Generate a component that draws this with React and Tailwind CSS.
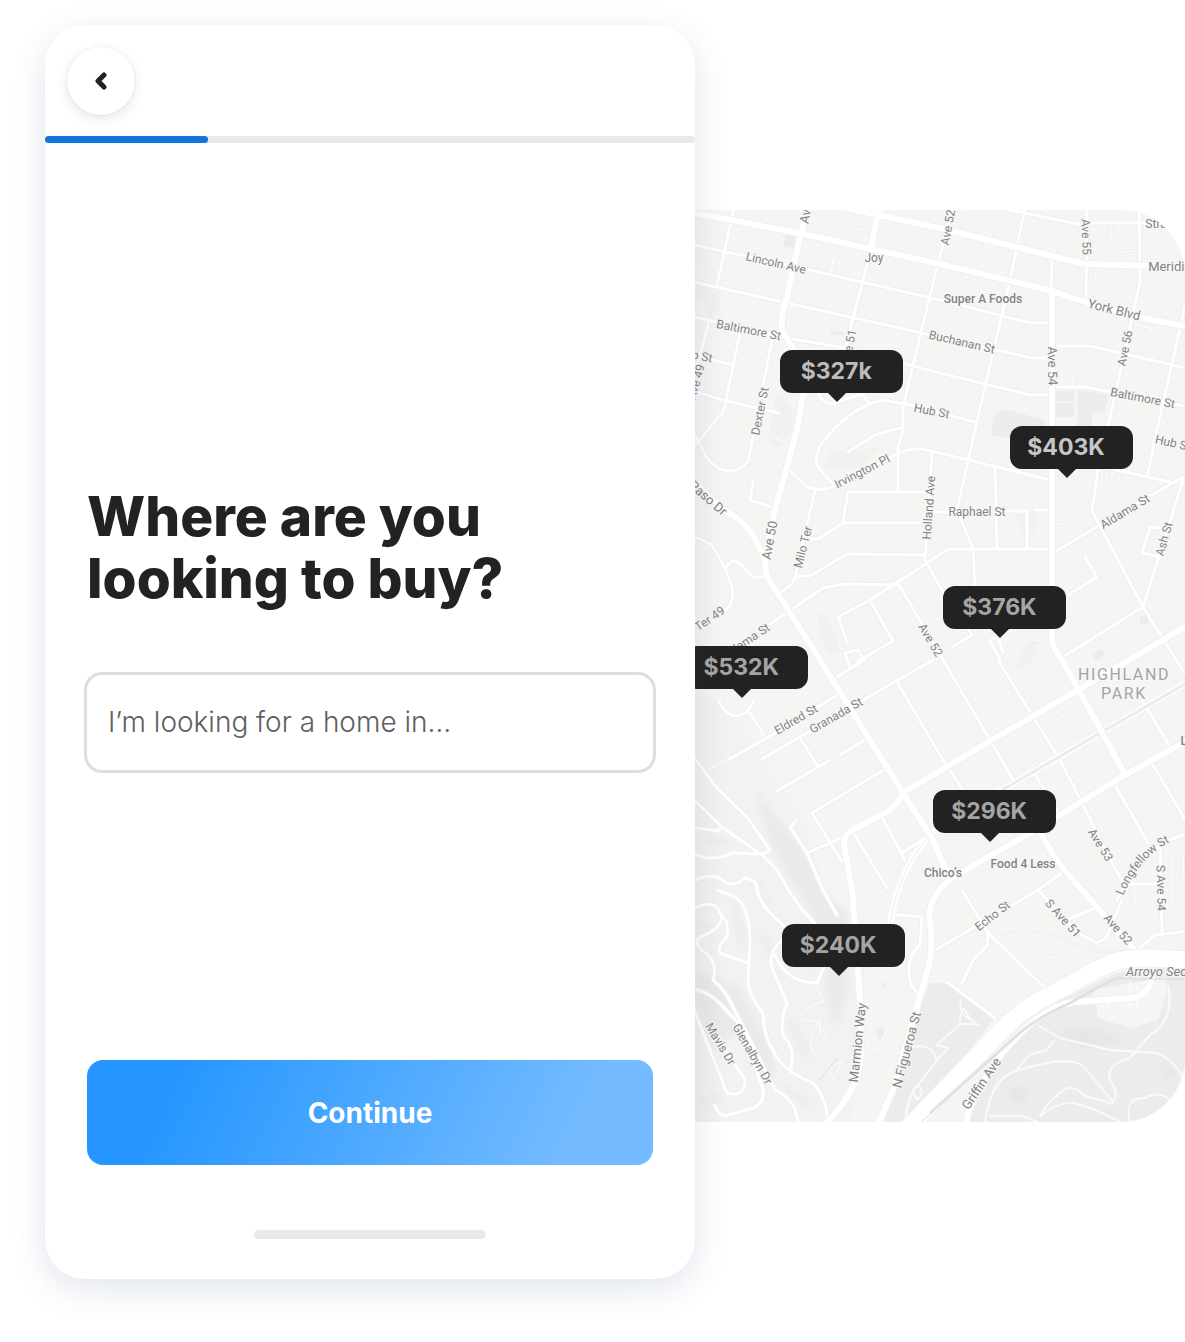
import React from "react";

const highways = [
  "M908 1128L1004 1028Q1025 1007 1050 995L1098 969Q1120 957 1145 958L1190 960",
];

const majorRoads = [
  "M690 212L803 234L940 264L1048 290L1085 302L1142 318L1190 327",
  "M846 208L940 228L1052 256L1085 264L1190 267",
  "M809 205L800 237L787 297Q779 320 783 333Q805 362 803 395L797 430L775 510L766 555Q764 570 768 578L820 660L903 793L932 838L950 880",
  "M879 208L871 248",
  "M1052 290L1052 580L1052 640Q1053 648 1062 660L1102 732L1125 775",
  "M690 477Q715 505 738 519Q753 530 765 560",
  "M852 890L845 850Q842 836 852 830L885 813Q895 809 903 793L990 741L1078 690L1190 624",
  "M852 885L860 1000Q864 1065 855 1083Q845 1103 826 1124",
  "M1190 739L1125 775L1032 832L960 873Q932 889 929 915Q934 940 929 965L893 1090L878 1124",
  "M966 1124Q970 1096 1002 1053Q1043 1005 1075 1002L1132 998Q1154 994 1152 968",
  "M1037 823Q1045 850 1082 890L1152 970",
];

const streets = [
  "M734 208L717 285", "M863 280L872 247M863 280L849 333L835 400",
  "M953 205L935 275L903 407V430L898 447V491",
  "M1025 208L1010 280L975 430L957 510L973 548L975 587",
  "M1087 208L1086 300", "M1139 208L1140 282L1108 427L1098 470L1092 511L1143 607L1190 682",
  "M1190 284L1157 430L1147 477", "M1052 256L1051 290",
  "M690 244L745 256L805 269L940 300L1030 323H1052",
  "M690 281L787 303L940 337L1032 358H1052",
  "M690 316L782 337L845 348L940 373L1030 395H1052",
  "M1000 208L1083 225L1090 223H1190",
  "M1055 346H1090L1190 369", "M1055 387H1085L1190 407",
  "M690 390L726 401L779 413",
  "M709 322L690 392M740 332L726 401Q725 412 716 420L694 447",
  "M772 340L753 437L748 462Q728 482 707 458L696 437",
  "M690 355L734 365", "M818 391Q821 405 835 403Q843 399 860 395",
  "M975 422L910 405L882 400Q855 407 833 430Q806 458 823 473L835 486",
  "M789 470L807 487Q822 493 837 485L890 458Q905 448 922 449L940 453L1050 480",
  "M848 452L875 435L900 428M862 394L868 402",
  "M753 482L750 500L775 508", "M815 490L796 573Q796 584 778 594",
  "M848 492H927M848 492L843 521M812 539H818L843 523H927",
  "M797 576H810L847 554L925 555",
  "M932 453L925 560L940 587L972 635L952 647",
  "M725 568L733 560Q740 562 753 577H765M690 534L712 545L725 568L732 587Q736 605 720 614",
  "M770 624L823 588L845 584L898 585",
  "M847 642L838 617L870 600L927 563L948 549H1052",
  "M870 600L893 641L858 661", "M898 583L943 660L990 740L1015 783",
  "M995 467L997 548M1007 511H1027V548M935 512H950M1035 510H1050",
  "M1055 552L1100 525L1190 473M1108 468L1170 482",
  "M1183 480L1143 607L1063 657M1165 528L1150 527L1142 553L1160 557",
  "M1068 595L1097 577L1085 557",
  "M728 760L772 735L842 692M719 701Q729 724 748 711L754 700M750 713L764 735",
  "M762 759L863 700L933 660", "M837 677L850 669L865 660",
  "M845 653L858 650L864 660L850 668Z",
  "M990 641L1000 660M990 641Q993 636 999 640L1003 653",
  "M777 791L830 760M840 755L868 738M800 738L817 765",
  "M887 768L812 813L842 862L847 859",
  "M797 820L790 827L807 853L823 890L837 915M807 853L843 837",
  "M897 682L940 755L963 790M853 832L887 888M882 817L905 860M903 852L938 830",
  "M998 660L1032 715L1060 760L1082 803L1105 850L1127 890",
  "M1035 775L1060 815M1115 785L1148 843M1152 763L1190 828M1142 700L1172 750",
  "M690 752L717 788L747 817L770 850L762 855L777 870L790 893L801 908L815 924",
  "M690 796L722 827L762 855M690 827L717 831L722 827M690 851Q707 864 733 853L762 854",
  "M690 883Q711 871 722 880T745 878Q758 880 757 890Q760 905 780 922L790 933",
  "M717 890L735 897Q749 905 750 940L748 985Q752 1000 763 1013Q764 1038 773 1050Q781 1070 813 1083Q829 1102 827 1124",
  "M690 911Q716 895 722 917Q720 930 700 937Q691 943 708 955Q718 966 713 980Q724 988 733 1007L745 1030Q757 1073 763 1090Q765 1103 753 1108L728 1115Q719 1118 715 1105",
  "M719 912Q730 920 727 937Q714 950 722 954L748 963",
  "M690 988Q711 991 726 1010L745 1030L775 1090Q797 1100 798 1124",
  "M690 1000L727 1093Q745 1098 745 1080L720 1040",
  "M782 940Q766 955 773 970L787 1003Q779 1025 784 1037Q797 1049 790 1072",
  "M775 955Q787 983 817 983L824 967",
  "M935 950L975 927L1038 890L1066 870M962 890L988 933L1045 988",
  "M1038 890L1078 933L1097 943L1106 938L1122 900M1062 922L1095 908",
  "M1117 900Q1140 857 1165 842L1190 832M1160 847L1162 933M1127 884H1160",
  "M1120 965L1155 935L1190 931",
  "M947 982L995 1018M988 933L987 946L973 960L962 983",
  "M888 914L922 917L920 945Q904 958 911 985L922 998",
];

const lanes = [
  "M695 264L718 269M837 246L831 274M832 260H839V275M833 260L829 275M833 296L829 310",
  "M845 225L885 236M862 217L875 220M862 217L861 226M787 312L790 316L787 330",
  "M955 214L1020 229M1063 210L1061 232M1111 224V240M1119 224V236M1127 239H1140M1115 260V252L1140 251",
  "M1068 283H1086M1095 270V280H1100M963 276L998 287M963 285L994 295M1000 280V272H1008",
  "M1113 288L1105 314M1140 293L1190 304M1170 304L1165 320M1135 325L1160 330L1155 343M1144 327L1141 339M1151 328L1148 341",
  "M1055 367H1090L1190 388M1073 372V386M997 390L996 405M900 382L935 391",
  "M935 390L978 400M1110 411L1190 430M1164 344L1160 360",
  "M773 438L792 444M775 458L786 461M753 450L768 453M799 485L787 546M752 530L770 535",
  "M935 431L971 441M1055 524H1068M1103 471L1100 483M1108 471L1105 485M1113 472L1110 486M1120 474L1118 486",
  "M1106 502L1113 516M1113 498L1122 512M1013 551V569M1107 589L1112 595L1130 585M1123 570L1137 562M1155 575L1175 580",
  "M1082 625L1093 613L1108 630M1097 611L1104 607L1111 621M1157 615L1165 610L1175 628L1168 632ZM1101 632L1118 660",
  "M690 595Q708 585 725 576M708 770L730 757M863 630L843 645M893 640L925 625",
  "M1000 640H1052M1026 628V640",
  "M830 820L882 793M823 827L874 803M865 716L852 740M875 694L914 760M887 712L906 702M914 690L945 740",
  "M860 839L904 817M900 808L925 795M902 772L935 750M823 687L827 700",
  "M1000 678L1015 703M964 680L1005 752M982 723L1030 696L1065 675M1045 725L1080 707M1013 731L1035 770M975 750L1004 794",
  "M1075 720L1101 762M1061 712L1078 742M1060 760L1078 751M1072 778L1092 768L1079 745",
  "M1100 675L1120 716M1152 693L1175 730M1120 746L1130 738L1138 752M1137 746L1160 733M1168 706L1184 735",
  "M1135 775L1145 793L1160 785M1170 760L1178 780L1165 790M1155 812L1170 804M1160 829L1185 814",
  "M1074 820L1102 814L1111 828L1096 840M1056 820L1070 830L1080 825M1096 878L1110 870",
  "M940 844L970 828M984 842L993 855M1054 843L1073 835L1080 850M970 878L990 870M975 883L1001 868M1120 875L1128 884",
  "M890 890L880 910L865 970M905 890L930 900M950 915Q958 901 975 896M1007 905L1015 920M1018 900L1026 918",
  "M1030 993L1038 983M1035 955L1050 958L1065 955L1077 962M1045 942L1055 950L1048 960M1005 955L998 968",
  "M980 978L990 987L982 1003M1018 978L1030 986L1040 981M1123 925L1132 930L1143 923",
  "M878 973H910M890 1004L912 1000M870 1048L890 1051M815 983L824 1002Q797 1008 802 1021Q822 1016 827 1040Q817 1041 820 1020Q804 1040 815 1055",
  "M895 1019L875 1050L868 1080L850 1124M829 1070L842 1061L834 1079ZM695 1078L710 1065M745 1085L762 1095",
  "M1135 870V905M1172 855V905M1184 850L1182 900",
];

const trails = [
  "M1037 1025L1060 1038L1110 1050L1157 1053Q1176 1060 1190 1090",
  "M985 1122Q991 1078 1016 1071Q1073 1053 1085 1068T1113 1102Q1120 1095 1110 1080Q1105 1065 1130 1058L1150 1035Q1175 1020 1168 985",
  "M1040 1116Q1046 1104 1060 1093Q1072 1082 1085 1096L1113 1104M1040 1116Q1056 1102 1074 1103Q1095 1108 1120 1122",
  "M1130 1122Q1123 1098 1145 1098Q1160 1090 1170 1100M1015 1072L1030 1054L1045 1051L1055 1040",
  "M960 1000L962 1014L980 1026M960 1022V1014M960 1024H978M963 1008L976 1026M937 1045L960 1024M935 1062L948 1048L936 1045",
  "M895 1054Q930 1036 937 1060Q930 1070 918 1085Q908 1096 905 1122M918 1085Q926 1094 917 1099Q909 1090 918 1085",
  "M990 1116H1022L1038 1122M1101 1000L1104 1010M1108 1000V1010M1130 980V1010M1137 985V1010M1142 984L1149 982",
];

const hills = [
  "M756 790Q770 810 790 833Q812 860 818 885Q833 905 846 908L848 990Q840 1025 834 1025Q824 1000 825 940Q805 900 780 862Q762 825 756 790Z",
  "M735 980Q748 1000 765 1035Q782 1075 768 1085Q745 1045 735 1025Q722 1000 735 980Z",
  "M695 975Q715 970 730 990L737 1030L715 1050Q700 1020 695 1000Z",
  "M1060 1033Q1090 1020 1120 1040Q1105 1049 1075 1045Z",
  "M830 450Q850 455 880 446L865 466Q840 476 825 465Z",
  "M775 395Q796 400 793 430L778 448Q765 445 770 425Z",
  "M820 610Q836 630 840 650L830 655Q815 635 820 610Z",
];

const labels = [
  ["Lincoln Ave", 775, 267, 13, 12], ["Joy", 874, 262, 0, 12], ["Baltimore St", 748, 334, 11, 12],
  ["Super A Foods", 983, 303, 0, 12, 500], ["York Blvd", 1113, 314, 14, 13], ["Buchanan St", 961, 346, 13, 12],
  ["Ave 52", 952, 228, -80, 12], ["Ave 55", 1082, 237, 88, 12], ["Ave 54", 1048, 366, 89, 13],
  ["Ave 56", 1129, 349, -78, 12], ["Meridian St", 1181, 271, 0, 13], ["Strat", 1158, 228, 0, 12],
  ["Ave 50", 812, 205, -79, 13], ["Ave 51", 853, 348, -79, 12], ["Baltimore St", 1142, 402, 11, 12],
  ["Hub St", 931, 415, 11, 12], ["Hub St", 1172, 447, 13, 12], ["Hub St", 694, 359, 11, 12], ["Ave 49", 700, 383, -74, 12],
  ["Dexter St", 764, 412, -79, 12], ["Irvington Pl", 864, 475, -27, 12], ["Holland Ave", 933, 508, -86, 12],
  ["Raphael St", 977, 516, 0, 12], ["Aldama St", 1127, 515, -31, 12], ["Ash St", 1168, 540, -74, 12],
  ["El Paso Dr", 700, 497, 41, 13], ["Ave 50", 774, 541, -80, 13], ["Milo Ter", 807, 548, -76, 12],
  ["Ter 49", 712, 622, -35, 12], ["Aldama St", 748, 645, -34, 12], ["Ave 52", 927, 642, 59, 12],
  ["Eldred St", 798, 723, -30, 12], ["Granada St", 838, 719, -30, 12], ["Chico’s", 943, 877, 0, 12, 500],
  ["Food 4 Less", 1023, 868, 0, 12, 500], ["Ave 53", 1097, 847, 58, 12], ["S Ave 54", 1157, 888, 89, 12],
  ["Echo St", 995, 919, -38, 12], ["S Ave 51", 1060, 921, 48, 12], ["Ave 52", 1115, 932, 48, 12],
  ["Marmion Way", 862, 1043, -84, 13], ["N Figueroa St", 911, 1051, -75, 13], ["Griffin Ave", 985, 1086, -56, 13],
  ["Mavis Dr", 717, 1046, 59, 12], ["Glenalbyn Dr", 749, 1056, 60, 12], ["La", 1187, 745, 0, 12, 500],
];

const pins = [
  { price: "$327k", place: "left-[17.3%] top-[15.3%]", tone: "text-[#bcbcbc]" },
  { price: "$403K", place: "left-[64.2%] top-[23.7%]", tone: "text-[#c6c6c6]" },
  { price: "$376K", place: "left-[50.6%] top-[41.2%]", tone: "text-[#a5a5a5]" },
  { price: "$532K", place: "left-[-2.1%] top-[47.8%]", tone: "text-[#a5a5a5]" },
  { price: "$296K", place: "left-[48.5%] top-[63.6%]", tone: "text-[#a5a5a5]" },
  { price: "$240K", place: "left-[17.7%] top-[78.3%]", tone: "text-[#a5a5a5]" },
];

function Roads({ paths, width, casing = "#eff0ef", edge = 2 }) {
  const d = paths.join("");
  return (
    <g fill="none" strokeLinejoin="round" strokeLinecap="round">
      <path d={d} stroke={casing} strokeWidth={width + edge} />
      <path d={d} stroke="#fff" strokeWidth={width} />
    </g>
  );
}

function StreetMap() {
  return (
    <svg viewBox="695 210 490 912" className="block h-auto w-full" role="img" aria-label="Map of Highland Park">
      <defs>
        <filter id="soft" x="-20%" y="-20%" width="140%" height="140%">
          <feGaussianBlur stdDeviation="3" />
        </filter>
        <path id="longfellow" d="M1123 896Q1139 857 1170 842" />
      </defs>
      <rect x="690" y="205" width="500" height="922" fill="#f5f5f4" />
      <path d="M695 690Q740 710 760 760Q800 800 825 890L870 940L850 1124H690Z" fill="#f1f2f1" filter="url(#soft)" />
      <g fill="#e9eae9" filter="url(#soft)">
        {hills.slice(0, 3).map((d) => <path key={d} d={d} />)}
      </g>
      <g fill="#f1f1f0">
        {hills.slice(4).map((d) => <path key={d} d={d} />)}
        <path d="M695 285Q718 288 720 305Q714 320 706 324Q713 300 695 296ZM1015 513H1035V532H1022ZM1028 640H1040L1030 664L1015 670ZM880 680L925 658L895 675Z" />
      </g>
      <path
        fill="none"
        stroke="#ebecec"
        strokeWidth="6"
        filter="url(#soft)"
        d="M760 930L775 960M800 945L812 970M700 1105L720 1095M755 880L770 910M705 840L730 842M790 1020L810 1060M735 900L742 950M700 925L712 930M780 1085L810 1105"
      />
      <g fill="#eaedec">
        <path d="M930 983H947L995 1018L912 1122H884L920 1010Z" />
        <path d="M968 1124L985 1080L1020 1035L1060 1000L1120 972L1190 966V1124Z" />
        <path d="M786 233L797 236L795 249L783 246Z" />
        <path d="M993 418Q1000 408 1012 411L1045 420L1046 440L992 436Z" />
        <path d="M1056 391H1074V401H1056ZM1056 403H1074V417H1056ZM1078 390L1108 395L1105 413L1092 412V426H1077Z" />
        <path d="M831 331L844 331L843 335H831ZM875 1030L883 1026L886 1033L879 1041ZM1140 617H1148V624H1140ZM1092 655L1102 648L1105 655L1096 661ZM881 983H886V987H881Z" />
      </g>
      <path d="M1093 990L1165 977L1167 992L1158 1020L1132 1028L1098 1018Z" fill="#f4f5f4" />
      <g fill="#e5e7e6" filter="url(#soft)">
        <path d={hills[3]} />
        <path d="M1015 1085L1030 1092L1020 1105L1005 1095ZM1080 1025L1120 1038L1105 1042ZM1155 1062L1175 1070L1170 1080ZM1100 1110L1115 1114L1105 1120Z" />
      </g>
      <path d="M1000 935Q1030 925 1060 938T1108 952H1135" fill="none" stroke="#f1f2f1" strokeWidth="3" />

      <Roads paths={lanes} width={1} casing="#eff1f0" edge={2} />
      <path d={trails.join("")} fill="none" stroke="#f9fafa" strokeWidth="2" strokeLinejoin="round" />
      <Roads paths={streets} width={3} />
      <path d="M1190 681L1102 732L1002 790L940 826Q899 860 889 930" fill="none" stroke="#fff" strokeWidth="6" />
      <path d="M1190 681L1102 732L1002 790" fill="none" stroke="#e8ecea" strokeWidth="3" />
      <path d="M1002 790L940 826Q899 860 889 930" fill="none" stroke="#eceeed" strokeWidth="1" />
      <Roads paths={majorRoads} width={6} />
      <Roads paths={highways} width={17} />
      <path d="M930 1113Q970 1077 1012 1040Q1032 1020 1070 1003L1100 986Q1115 976 1140 975" fill="none" stroke="#e3e6e5" strokeWidth="3" />
      <path d="M915 1128L1014 1038Q1034 1018 1070 1003L1115 979H1190" fill="none" stroke="#d8dbda" strokeWidth="1" />
      <path d="M819 1080L838 1058" fill="none" stroke="#dddddc" strokeWidth="1" />

      <g
        fill="#838383"
        stroke="#f8f8f7"
        strokeWidth="2"
        paintOrder="stroke"
        textAnchor="middle"
        className="font-['Roboto',sans-serif]"
      >
        {labels.map(([text, x, y, angle, size, weight], i) => (
          <text key={i} x={x} y={y} fontSize={size} fontWeight={weight || 400} transform={`rotate(${angle} ${x} ${y})`}>
            {text}
          </text>
        ))}
        <text fontSize="12">
          <textPath href="#longfellow" startOffset="50%">Longfellow St</textPath>
        </text>
        <text x="1160" y="976" fontSize="13" fontStyle="italic">Arroyo Seco</text>
        <g fill="#a3a3a3" className="text-base tracking-widest">
          <text x="1124" y="680">HIGHLAND</text>
          <text x="1124" y="699">PARK</text>
        </g>
      </g>
    </svg>
  );
}

function Pin({ price, place, tone }) {
  return (
    <button type="button" className={`absolute ${place} h-[43px] w-[123px] rounded-xl bg-[#222] pr-[10px] text-center text-[23px] font-bold ${tone}`}>
      {price}
      <svg viewBox="0 0 20 10" className="absolute top-full left-[47px] -mt-px h-[10px] w-5" aria-hidden="true">
        <path d="M0 0H20L10 10Z" fill="#222" />
      </svg>
    </button>
  );
}

export default function App() {
  return (
    <div className="grid grid-cols-[65fr_49fr] items-start overflow-hidden bg-white pt-[25px] pb-[63px] pl-[45px] font-['Inter',sans-serif] text-[#222]">
      <main className="relative z-10 rounded-[40px] bg-white shadow-[0_10px_34px_rgba(40,70,120,0.14)]">
        <header className="px-[22px] pt-[22px] pb-[21px]">
          <button
            type="button"
            aria-label="Back"
            className="flex size-[68px] items-center justify-center rounded-full bg-white shadow-[0_0_1px_1px_rgba(0,0,0,0.04),0_4px_12px_rgba(40,60,110,0.12)]"
          >
            <svg viewBox="0 0 14 18" className="h-[18px] w-[14px]" fill="none" stroke="#222" strokeWidth="5" strokeLinecap="round" strokeLinejoin="round" aria-hidden="true">
              <path d="M10 3L4 9L10 15" />
            </svg>
          </button>
        </header>
        <div role="progressbar" aria-label="Progress" aria-valuenow={25} aria-valuemin={0} aria-valuemax={100} className="h-[7px] rounded-full bg-[#e8e8e8]">
          <div className="h-full w-1/4 rounded-full bg-[#1277dc]" />
        </div>
        <form className="px-[39px] pt-[342px] pb-10" onSubmit={(e) => e.preventDefault()}>
          <h1 className="px-[3px] text-[55px] leading-[62px] font-extrabold">
            <label htmlFor="place">
              Where are you
              <br />
              looking to buy?
            </label>
          </h1>
          <input
            id="place"
            type="text"
            placeholder="I’m looking for a home in…"
            className="mt-[63px] block h-[101px] w-full rounded-[18px] border-[3px] border-[#dedede] bg-white px-[21px] pb-[2px] text-[28px] font-light outline-none placeholder:text-[#606060] placeholder:opacity-100"
          />
          <div className="mt-[287px] px-[3px]">
            <button
              type="submit"
              className="h-[105px] w-full rounded-2xl bg-[linear-gradient(115deg,#2596ff_15%,#74bbff_85%)] text-[28px] font-bold text-white"
            >
              Continue
            </button>
          </div>
          <div className="mx-auto mt-[65px] h-[9px] w-[232px] rounded-full bg-[#e8e9ea]" />
        </form>
      </main>
      <section aria-label="Homes for sale" className="relative mt-[185px] overflow-hidden rounded-r-[64px]">
        <StreetMap />
        {pins.map((pin) => (
          <Pin key={pin.price} {...pin} />
        ))}
      </section>
    </div>
  );
}
